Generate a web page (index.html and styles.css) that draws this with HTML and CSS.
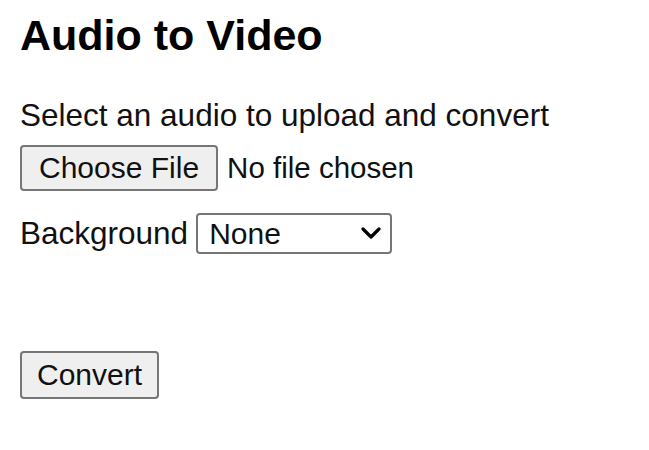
FILE: index.html
```html
<!DOCTYPE html>
<html lang="en">
<head>
    <meta charset="UTF-8">
    <meta name="viewport" content="width=device-width, initial-scale=1.0">
    <title>Audio to Video</title>
    <link rel="stylesheet" href="styles.css">
</head>
<body>
    <h2>Audio to Video</h2>

    <form class="convert-form" onsubmit="return false">
        <p class="hint">Select an audio to upload and convert</p>
        <input type="file" id="audio" accept="audio/*">

        <div class="row">
            <label for="background">Background</label>
            <span class="select-wrap">
                <select id="background">
                    <option value="none">None</option>
                    <option value="black">Black</option>
                    <option value="image">Image</option>
                </select>
                <svg class="chevron" viewBox="0 0 20 12" width="20" height="12">
                    <path d="M2 2 L10 10 L18 2" fill="none" stroke="#000" stroke-width="3.2" stroke-linecap="round" stroke-linejoin="round"/>
                </svg>
            </span>
        </div>

        <button type="submit" class="convert-btn">Convert</button>
    </form>
</body>
</html>
```

FILE: styles.css
```css
body {
    font-family: 'Liberation Sans', Arial, sans-serif;
    margin: 0;
    padding: 11px 20px;
    background: white;
    color: #111;
}
h2 {
    font-size: 43px;
    font-weight: bold;
    margin: 0;
    color: #000;
}
.convert-form {
    display: flex;
    flex-direction: column;
    align-items: flex-start;
    margin-top: 37px;
}
.hint {
    font-size: 31.5px;
    margin: 0 0 11px;
}
input[type="file"] {
    font-family: inherit;
    font-size: 29.5px;
    color: #111;
}
input[type="file"]::file-selector-button {
    font-family: inherit;
    font-size: 30px;
    color: #111;
    background: #efefef;
    border: 2px solid #767676;
    border-radius: 4px;
    padding: 4px 17px;
    margin-right: 9px;
}
.row {
    display: flex;
    align-items: center;
    gap: 8px;
    margin-top: 22px;
}
.row label {
    font-size: 31.5px;
}
.select-wrap {
    position: relative;
    display: inline-block;
}
select {
    appearance: none;
    font-family: inherit;
    font-size: 30px;
    color: #111;
    width: 196px;
    height: 41px;
    padding: 0 11px;
    border: 2px solid #767676;
    border-radius: 4px;
    background: white;
}
.chevron {
    position: absolute;
    right: 11px;
    top: 14px;
    pointer-events: none;
}
.convert-btn {
    font-family: inherit;
    font-size: 30px;
    color: #111;
    background: #efefef;
    border: 2px solid #767676;
    border-radius: 4px;
    padding: 5px 15px;
    margin-top: 97px;
}
```
